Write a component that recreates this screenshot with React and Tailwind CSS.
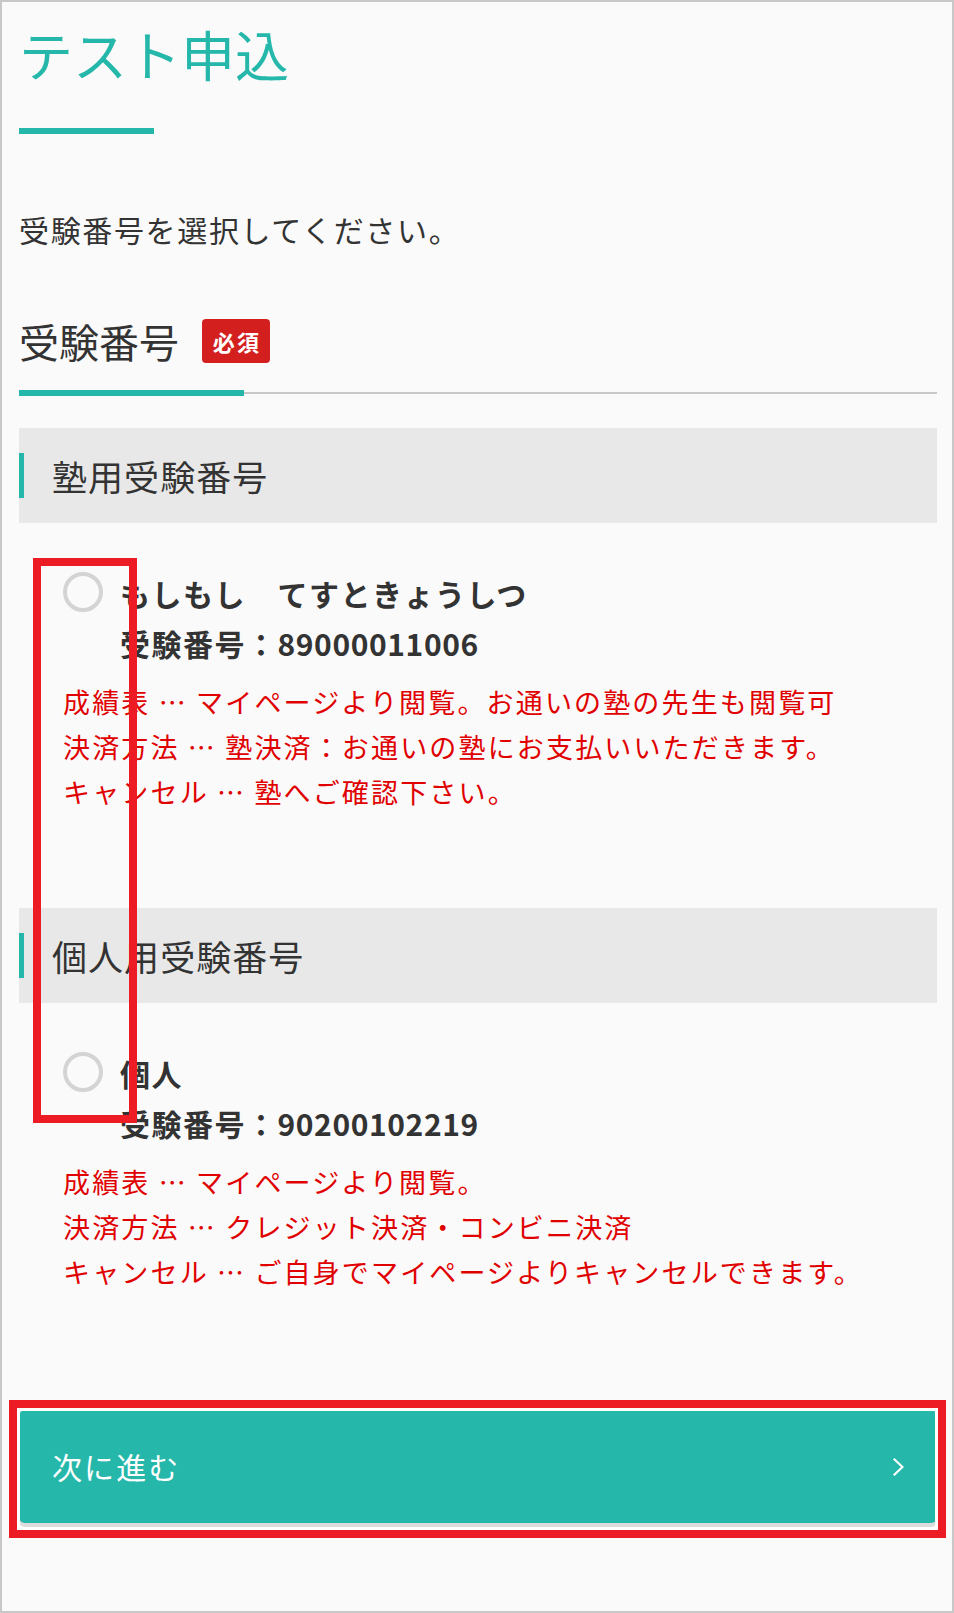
import React from 'react';

// One block per kind of exam number
function NumberGroup({ title, name, number, notes, className }) {
  return (
    <section className={className}>
      <div className="flex h-[95px] items-center bg-[#e8e8e8]">
        <span className="h-[45px] w-[5px] bg-[#26b7ab]" />
        <h3 className="ml-[28px] text-[35px] leading-none font-normal tracking-[0.03em]">{title}</h3>
      </div>

      <div className="mt-[45px] pl-[44px]">
        <label className="flex">
          <span className="mt-[4px] size-[40px] shrink-0 rounded-full border-4 border-[#d4d4d4]" />
          <div className="ml-[17px] text-[30px] leading-[50px] font-bold tracking-[0.05em]">
            <p>{name}</p>
            <p>
              受験番号：<span className="tracking-[0.02em]">{number}</span>
            </p>
          </div>
        </label>
        <div className="mt-[11px] text-[27px] leading-[45px] tracking-[0.08em] text-[#e00000]">
          {notes.map((line) => (
            <p key={line}>{line}</p>
          ))}
        </div>
      </div>
    </section>
  );
}

export default function App() {
  return (
    <div className="relative h-[1613px] w-[954px] border-2 border-[#c8c8c8] bg-[#fafafa] pl-[17px] pr-[15px] font-['Noto_Sans_CJK_JP',sans-serif] text-[#333]">
      <h1 className="pt-[25px] text-[54px] leading-[54px] font-normal text-[#26b7ab]">テスト申込</h1>
      <div className="mt-[47px] h-[6px] w-[135px] bg-[#26b7ab]" />

      <p className="mt-[80px] text-[30px] leading-[30px] tracking-[0.055em]">受験番号を選択してください。</p>

      {/* Field label + required badge */}
      <div className="mt-[75px] flex h-[44px] items-center">
        <h2 className="text-[40px] leading-[40px] font-normal">受験番号</h2>
        <span className="ml-[23px] flex h-[44px] w-[68px] items-center justify-center rounded-[4px] bg-[#d41f1f] pl-[2px] text-[22px] font-bold tracking-[0.1em] text-white">
          必須
        </span>
      </div>
      <div className="mt-[27px] flex h-[6px] items-center">
        <div className="h-full w-[225px] bg-[#26b7ab]" />
        <div className="h-[2px] flex-1 bg-[#c8c8c8]" />
      </div>

      <NumberGroup
        className="mt-[32px]"
        title="塾用受験番号"
        name="もしもし　てすときょうしつ"
        number="89000011006"
        notes={[
          '成績表 … マイページより閲覧。お通いの塾の先生も閲覧可',
          '決済方法 … 塾決済：お通いの塾にお支払いいただきます。',
          'キャンセル … 塾へご確認下さい。',
        ]}
      />

      <NumberGroup
        className="mt-[94px]"
        title="個人用受験番号"
        name="個人"
        number="90200102219"
        notes={[
          '成績表 … マイページより閲覧。',
          '決済方法 … クレジット決済・コンビニ決済',
          'キャンセル … ご自身でマイページよりキャンセルできます。',
        ]}
      />

      <button
        type="button"
        className="mt-[116px] flex h-[113px] w-full items-center justify-between rounded-[6px] bg-[#26b7ab] pl-[33px] pr-[33px] text-[30px] tracking-[0.07em] text-white shadow-[0_4px_0_#dcdcdc]"
      >
        <span>次に進む</span>
        <svg width="11" height="18" viewBox="0 0 11 18" fill="none" stroke="white" strokeWidth="2.2" strokeLinecap="square">
          <path d="M1.5 1.5 L9.5 9 L1.5 16.5" />
        </svg>
      </button>

      {/* annotation marks over the screenshot */}
      <div className="pointer-events-none absolute left-[31px] top-[556px] h-[565px] w-[104px] border-[8px] border-[#ed1c24]" />
      <div className="pointer-events-none absolute left-[7px] top-[1398px] h-[138px] w-[937px] border-[8px] border-[#ed1c24] shadow-[inset_0_0_0_3px_#fff]" />
    </div>
  );
}
